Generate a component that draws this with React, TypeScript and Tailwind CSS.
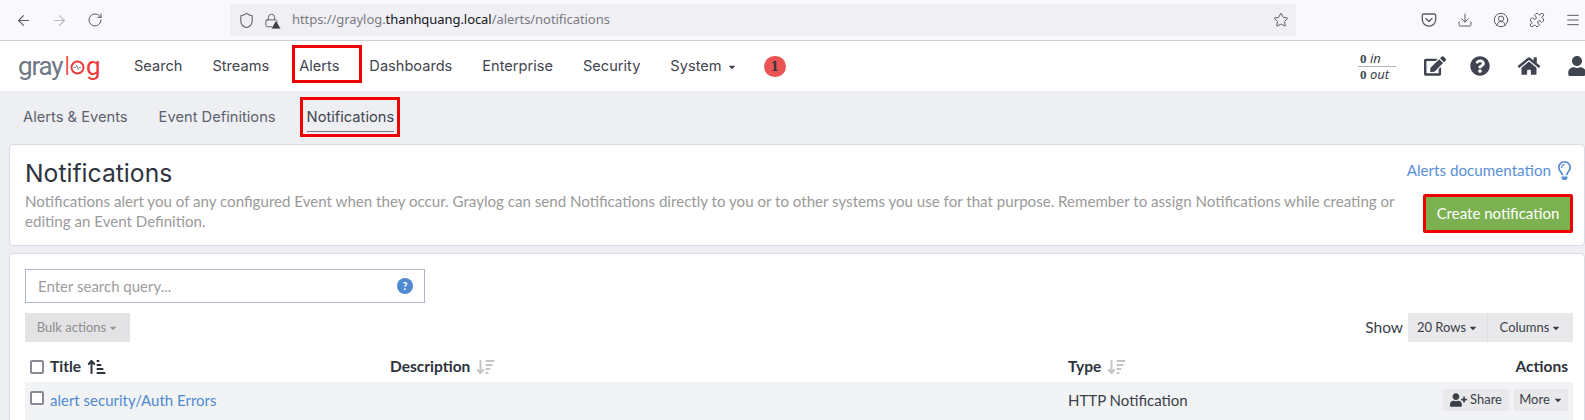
import { ArrowLeft, ArrowRight, RotateCw, Shield, Lock, Star, Download, CircleUserRound, Puzzle, Menu } from 'lucide-react';
import { FaEdit, FaQuestionCircle, FaHome, FaUser, FaUserPlus, FaRegLightbulb, FaCaretDown } from 'react-icons/fa';
import { FaArrowUpShortWide, FaArrowDownWideShort } from 'react-icons/fa6';

const navItems = ['Search', 'Streams', 'Alerts', 'Dashboards', 'Enterprise', 'Security'];

function Caret({ className = '' }: { className?: string }) {
    return <FaCaretDown className={`w-2.5 h-2.5 ${className}`} />;
}

function Checkbox() {
    return <span className="w-[14px] h-[14px] rounded-[2px] border-2 border-[#8a8a94] bg-white shrink-0" />;
}

function BrowserBar() {
    return (
        <div className="h-[41px] bg-[#f9f9fb] border-b border-[#cfcfd2] flex items-center text-[#5b5b66] font-['Inter',sans-serif]">
            <div className="flex items-center gap-[19px] pl-[15px] w-[230px]">
                <ArrowLeft className="w-[17px] h-[17px]" strokeWidth={1.5} />
                <ArrowRight className="w-[17px] h-[17px] text-[#b9b9bf]" strokeWidth={1.5} />
                <RotateCw className="w-[16px] h-[16px]" strokeWidth={1.5} />
            </div>
            <div className="w-[1066px] h-[32px] rounded bg-[#f0f0f4] flex items-center pl-[8px] pr-[6px]">
                <Shield className="w-[17px] h-[17px]" strokeWidth={1.5} />
                <span className="relative ml-[9px] w-[15px] h-[15px]">
                    <Lock className="w-[15px] h-[15px]" strokeWidth={1.5} />
                    <svg viewBox="0 0 10 9" className="absolute -right-[2px] -bottom-[1px] w-[10px] h-[9px]">
                        <path d="M5 0l5 9H0z" fill="#3f3f46" stroke="#f0f0f4" strokeWidth="0.8" />
                    </svg>
                </span>
                <span className="ml-[13px] text-[13px] text-[#7a7a83] font-['Noto_Sans',sans-serif] tracking-[-0.06px]">
                    https://graylog.<span className="text-[#15141a]">thanhquang.local</span>/alerts/notifications
                </span>
                <Star className="w-[16px] h-[16px] ml-auto mr-[1px]" strokeWidth={1.5} />
            </div>
            <div className="flex items-center gap-[20px] ml-auto pr-[4px]">
                <svg viewBox="0 0 16 16" className="w-[16px] h-[16px]" fill="none" stroke="currentColor" strokeWidth="1.3">
                    <path d="M2.5 2h11A1.2 1.2 0 0 1 14.7 3.2V7.5A6.7 6.7 0 0 1 1.3 7.5V3.2A1.2 1.2 0 0 1 2.5 2z" />
                    <path d="M5 6.5l3 3 3-3" strokeLinecap="round" strokeLinejoin="round" />
                </svg>
                <Download className="w-[16px] h-[16px]" strokeWidth={1.5} />
                <CircleUserRound className="w-[16px] h-[16px]" strokeWidth={1.5} />
                <Puzzle className="w-[16px] h-[16px]" strokeWidth={1.5} />
                <Menu className="w-[16px] h-[16px]" strokeWidth={1.5} />
            </div>
        </div>
    );
}

function Logo() {
    return (
        <div className="flex items-center text-[26px] leading-none tracking-[-1.2px] font-['Roboto',sans-serif] font-normal">
            <span className="text-[#6f7785]">gray</span>
            <span className="text-[#ef3b3b] font-light ml-[2px]">l</span>
            <svg viewBox="0 0 20 20" className="w-[15px] h-[15px] mt-[3px] ml-[1px]">
                <circle cx="10" cy="10" r="8" fill="none" stroke="#ef3b3b" strokeWidth="2.6" />
                <path d="M5 10h3l1-3 2 6 1-3h3" fill="none" stroke="#6f7785" strokeWidth="1" />
            </svg>
            <span className="text-[#ef3b3b] ml-[1px]">g</span>
        </div>
    );
}

function NavBar() {
    return (
        <div className="h-[50px] bg-white flex items-center overflow-hidden text-[#3f4450] font-['Inter',sans-serif]">
            <div className="pl-[18px] w-[119px]">
                <Logo />
            </div>
            <div className="flex items-center text-[14.6px] pt-[2px]">
                {navItems.map((item) => (
                    <div key={item} className="relative px-[15px]">
                        {item}
                        {item === 'Alerts' && (
                            <span className="absolute left-[8px] -right-[8px] -top-[11px] -bottom-[5px] border-[3px] border-[#f00000]" />
                        )}
                    </div>
                ))}
                <div className="flex items-center gap-[5px] px-[15px]">
                    System <Caret className="text-[#3f4450]" />
                </div>
                <span className="ml-[12px] w-[22px] h-[21px] rounded-full bg-[#eb5454] text-[#33343b] text-[12px] font-bold flex items-center justify-center font-['DejaVu_Serif',serif]">
                    1
                </span>
            </div>
            <div className="ml-auto flex items-center text-[#3f4450]">
                <div className="w-[38px] mr-[28px] pl-[2px] text-[13px] leading-[15px] font-['Noto_Sans',sans-serif] whitespace-nowrap">
                    <div className="-ml-[2px] pl-[2px] border-b border-[#aeb1b8]"><b className="font-['Liberation_Serif',serif]">0</b> <i>in</i></div>
                    <div><b className="font-['Liberation_Serif',serif]">0</b> <i>out</i></div>
                </div>
                <FaEdit className="w-[22px] h-[20px]" />
                <FaQuestionCircle className="w-[20px] h-[20px] ml-[24px]" />
                <FaHome className="w-[24px] h-[20px] ml-[27px]" />
                <FaUser className="w-[20px] h-[20px] ml-[26px] -mr-[2px]" />
            </div>
        </div>
    );
}

function SubNav() {
    return (
        <div className="h-[53px] flex items-center text-[14.7px] text-[#5d626e] font-['Inter',sans-serif] pl-[23px]">
            <span>Alerts &amp; Events</span>
            <span className="ml-[31px]">Event Definitions</span>
            <span className="relative ml-[31px] text-[#3f4450]">
                Notifications
                <span className="absolute left-0 right-0 -bottom-[3px] h-px bg-[#777b85]" />
                <span className="absolute -left-[7px] -right-[6px] -top-[9px] -bottom-[8px] border-[3px] border-[#f00000]" />
            </span>
        </div>
    );
}

function HeaderCard() {
    return (
        <div className="ml-[9px] h-[102px] bg-white border border-[#d8dbe3] rounded-[4px] flex font-['Lato',sans-serif]">
            <div className="flex-1 pl-[15px] pt-[11px]">
                <h1 className="text-[24.7px] leading-[34px] text-[#2e333d] font-['Inter',sans-serif]">Notifications</h1>
                <p className="mt-[1px] w-[1375px] text-[15.1px] leading-[20px] text-[#9a9a9a]">
                    Notifications alert you of any configured Event when they occur. Graylog can send Notifications directly to you or to other systems you use for that purpose. Remember to assign Notifications while creating or editing an Event Definition.
                </p>
            </div>
            <div className="flex flex-col items-end pr-[11px] pt-[13px]">
                <a className="flex items-center gap-[6px] pr-[1px] text-[15.2px] leading-[24px] text-[#5a8fd6] whitespace-nowrap">
                    Alerts documentation
                    <FaRegLightbulb className="w-[15px] h-[19px]" />
                </a>
                <button className="mt-[12px] w-[150px] h-[39px] bg-[#7bb151] border-[3px] border-[#f00000] rounded-[2px] text-white text-[15px]">
                    Create notification
                </button>
            </div>
        </div>
    );
}

function SortIcon({ active }: { active?: boolean }) {
    return active ? (
        <FaArrowUpShortWide className="w-[19px] h-[16px] text-[#2e333d]" />
    ) : (
        <FaArrowDownWideShort className="w-[19px] h-[16px] text-[#c4c4c4]" />
    );
}

function TableCard() {
    return (
        <div className="ml-[9px] mt-[7px] bg-white border border-[#d8dbe3] rounded-[4px] font-['Lato',sans-serif] text-[15px] text-[#3a3f4a]">
            <div className="pl-[15px] pt-[15px] pr-[11px]">
                <div className="w-[400px] h-[34px] border border-[#adb5c7] flex items-center pl-[12px] pr-[11px]">
                    <span className="text-[#9d9d9d]">Enter search query...</span>
                    <span className="ml-auto w-[16px] h-[16px] rounded-full bg-[#4f8ad1] text-white text-[11px] font-bold flex items-center justify-center">?</span>
                </div>
                <div className="flex items-center mt-[10px] h-[29px]">
                    <button className="h-full w-[105px] bg-[#e3e3e5] text-[#8e8e8e] text-[13px] flex items-center justify-center gap-[2px]">
                        Bulk actions <Caret className="text-[#9a9a9a]" />
                    </button>
                    <span className="ml-auto mr-[5px] text-[15.5px]">Show</span>
                    <button className="h-full w-[80px] bg-[#e9e9eb] border-r border-[#dedee0] text-[13px] flex items-center justify-center gap-[2px]">
                        20 Rows <Caret />
                    </button>
                    <button className="h-full w-[85px] bg-[#e9e9eb] text-[13px] flex items-center justify-center gap-[2px]">
                        Columns <Caret />
                    </button>
                </div>
                <div className="flex items-center h-[40px] pt-[10px] font-bold text-[15.5px] text-[#2e333d]">
                    <div className="w-[365px] flex items-center pl-[5px]">
                        <Checkbox />
                        <span className="ml-[6px] mr-[6px]">Title</span>
                        <SortIcon active />
                    </div>
                    <div className="w-[678px] flex items-center gap-[6px]">
                        Description <SortIcon />
                    </div>
                    <div className="flex items-center gap-[6px]">
                        Type <SortIcon />
                    </div>
                    <span className="ml-auto pr-[5px]">Actions</span>
                </div>
            </div>
            <div className="ml-[15px] mr-[11px] h-[60px] bg-[#f2f3f5] flex items-start">
                <div className="w-[365px] flex items-center pl-[5px] pt-[3px]">
                    <Checkbox />
                    <a className="ml-[6px] mt-[4px] text-[#4f8ad1]">alert security/Auth Errors</a>
                </div>
                <div className="w-[678px]" />
                <div className="pt-[7px]">HTTP Notification</div>
                <div className="ml-auto flex items-center gap-[5px] pt-[7px] pr-[5px] text-[13px]">
                    <button className="w-[66px] h-[22px] bg-[#e9e9eb] flex items-center justify-center gap-[3px]">
                        <FaUserPlus className="w-[17px] h-[14px]" /> Share
                    </button>
                    <button className="w-[54px] h-[22px] bg-[#e9e9eb] flex items-center justify-center gap-[3px]">
                        More <Caret />
                    </button>
                </div>
            </div>
        </div>
    );
}

export default function App() {
    return (
        <div className="h-[420px] overflow-hidden bg-[#eeeff2]">
            <BrowserBar />
            <NavBar />
            <SubNav />
            <HeaderCard />
            <TableCard />
        </div>
    );
}
